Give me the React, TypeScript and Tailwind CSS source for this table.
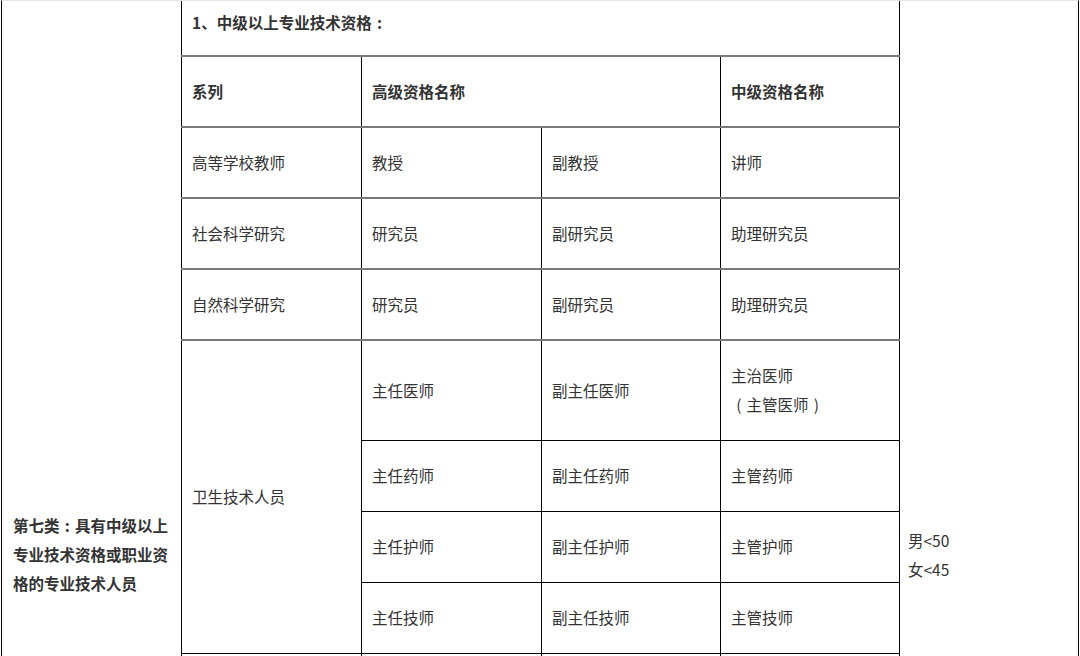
const rows = [
  { series: "高等学校教师", senior: "教授", deputy: "副教授", mid: ["讲师"] },
  { series: "社会科学研究", senior: "研究员", deputy: "副研究员", mid: ["助理研究员"] },
  { series: "自然科学研究", senior: "研究员", deputy: "副研究员", mid: ["助理研究员"] },
];

const health = [
  { senior: "主任医师", deputy: "副主任医师", mid: ["主治医师", "（主管医师）"], h: "h-[100px]" },
  { senior: "主任药师", deputy: "副主任药师", mid: ["主管药师"], h: "h-[71px]" },
  { senior: "主任护师", deputy: "副主任护师", mid: ["主管护师"], h: "h-[71px]" },
  { senior: "主任技师", deputy: "副主任技师", mid: ["主管技师"], h: "h-[71px]" },
];

const td = "border-x border-black px-[10px] align-middle";

// full-width punctuation set centred in its box, as Microsoft YaHei draws it
function Punct({ ch }: { ch: string }) {
  return <span className="inline-block w-[1em] text-center">{ch}</span>;
}

function Mid({ text }: { text: string }) {
  if (text.startsWith("（")) {
    return (
      <div>
        <Punct ch="(" />
        {text.slice(1, -1)}
        <Punct ch=")" />
      </div>
    );
  }
  return <div>{text}</div>;
}

export default function App() {
  return (
    <div className="h-[656px] w-[1080px] overflow-hidden bg-white font-['Microsoft_YaHei','Noto_Sans_CJK_SC',sans-serif] text-[15.5px] leading-[29px] text-[#333]">
      <div className="ml-px grid h-[1108px] w-[1078px] grid-cols-[179px_718px_1fr] border-x border-black border-t border-t-[#e5e5e5]">
        {/* left label */}
        <div className="flex items-center pl-[11px] font-bold">
          <p>
            第七类<Punct ch=":" />具有中级以上
            <br />
            专业技术资格或职业资
            <br />
            格的专业技术人员
          </p>
        </div>

        {/* inner table */}
        <table className="h-fit w-full table-fixed border-collapse">
          <colgroup>
            <col className="w-[180px]" />
            <col className="w-[180px]" />
            <col className="w-[179px]" />
            <col className="w-[179px]" />
          </colgroup>
          <tbody>
            <tr className="h-[55px] border-b-2 border-[#7a7a7a]">
              <td colSpan={4} className={`${td} pt-[7px] align-top font-bold`}>
                1、中级以上专业技术资格<Punct ch=":" />
              </td>
            </tr>
            <tr className="h-[71px] border-b-2 border-[#7a7a7a] font-bold">
              <td className={td}>系列</td>
              <td colSpan={2} className={td}>
                高级资格名称
              </td>
              <td className={td}>中级资格名称</td>
            </tr>
            {rows.map((r, i) => (
              <tr key={i} className="h-[71px] border-b-2 border-[#7a7a7a]">
                <td className={td}>{r.series}</td>
                <td className={td}>{r.senior}</td>
                <td className={td}>{r.deputy}</td>
                <td className={td}>
                  {r.mid.map((m) => (
                    <Mid key={m} text={m} />
                  ))}
                </td>
              </tr>
            ))}
            {health.map((r, i) => (
              <tr key={r.senior} className={`${r.h} border-b border-black`}>
                {i === 0 && (
                  <td rowSpan={4} className={td}>
                    卫生技术人员
                  </td>
                )}
                <td className={td}>{r.senior}</td>
                <td className={td}>{r.deputy}</td>
                <td className={td}>
                  {r.mid.map((m) => (
                    <Mid key={m} text={m} />
                  ))}
                </td>
              </tr>
            ))}
            <tr className="h-[71px]">
              <td className={td}></td>
              <td className={td}></td>
              <td className={td}></td>
              <td className={td}></td>
            </tr>
          </tbody>
        </table>

        {/* age limits */}
        <div className="flex items-center pl-[9px]">
          <p>
            男&lt;50
            <br />
            女&lt;45
          </p>
        </div>
      </div>
    </div>
  );
}
